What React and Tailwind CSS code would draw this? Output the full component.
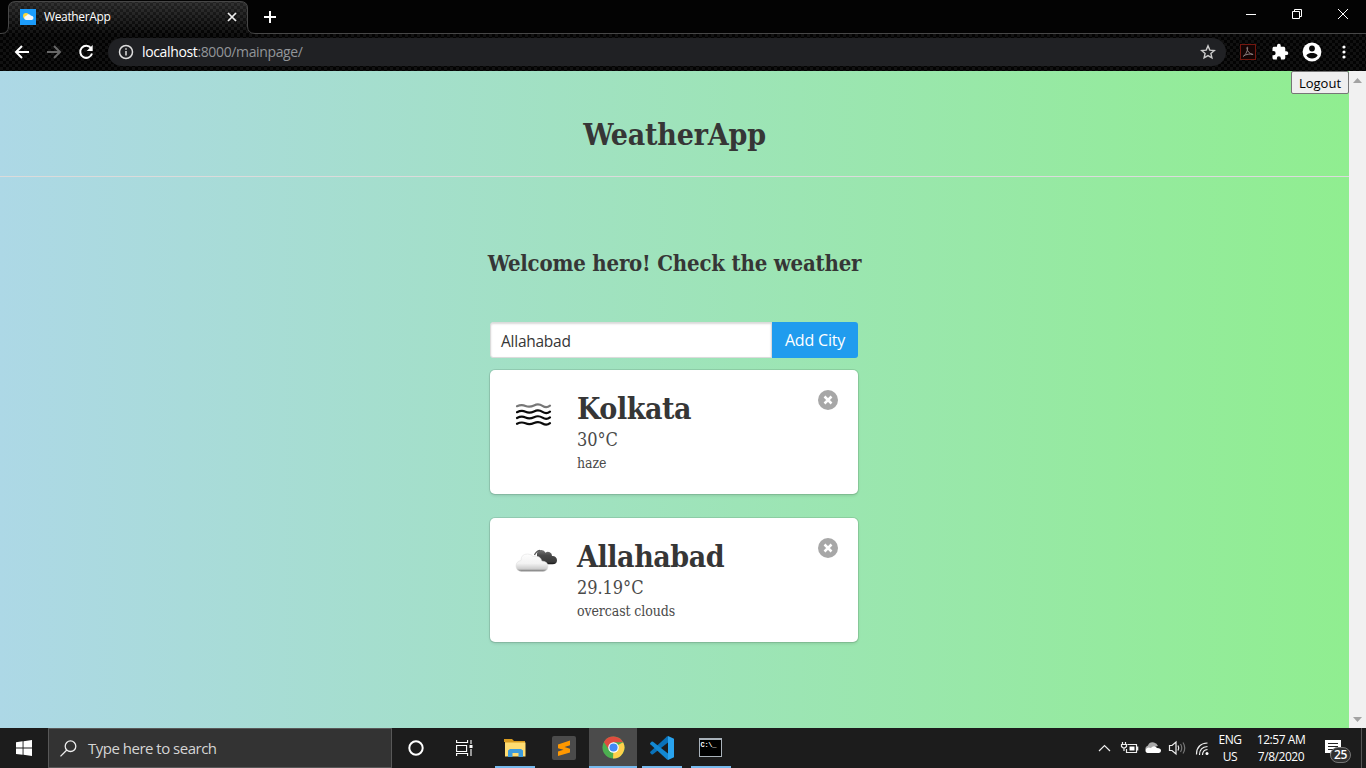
import React from "react";

const carbon =
  "bg-[#030303] bg-[linear-gradient(45deg,#111_25%,transparent_25%,transparent_75%,#111_75%),linear-gradient(45deg,#111_25%,transparent_25%,transparent_75%,#111_75%)] bg-[size:6px_6px] bg-[position:0_0,3px_3px]";
const ui = "font-['Open_Sans','Noto_Sans',sans-serif]";
const serif = "font-['DejaVu_Serif_Condensed','DejaVu_Serif',serif] [font-stretch:condensed]";

function BrowserTabs() {
  return (
    <div className="relative flex h-[34px] shrink-0 bg-[#030303]">
      <svg className="absolute left-0 top-0" width="1366" height="34" fill="none">
        <defs>
          <pattern id="weave" width="6" height="6" patternUnits="userSpaceOnUse">
            <rect width="3" height="3" fill="#141414" />
            <rect x="3" y="3" width="3" height="3" fill="#141414" />
          </pattern>
          <linearGradient id="tabShade" x1="0" y1="0" x2="0" y2="1">
            <stop offset="0" stopColor="#fff" stopOpacity=".13" />
            <stop offset="1" stopColor="#fff" stopOpacity="0" />
          </linearGradient>
        </defs>
        <path d="M0 34V33.500Q8.500 33.500 8.500 26V8Q8.500 1.500 16 1.500H240Q247.500 1.500 247.500 8V26Q247.500 33.500 255 33.500V34Z" fill="url(#weave)" />
        <path d="M8.500 34V8Q8.500 1.500 16 1.500H240Q247.500 1.500 247.500 8V34Z" fill="url(#tabShade)" />
        <path d="M0 33.500H1Q8.500 33.500 8.500 26V8Q8.500 1.500 16 1.500H240Q247.500 1.500 247.500 8V26Q247.500 33.500 255 33.500H1366" stroke="#474747" />
      </svg>
      <div className="relative flex w-[248px] items-center pl-5">
        <svg width="16" height="16" viewBox="0 0 16 16">
          <rect width="16" height="16" fill="#1c9cfb" />
          <circle cx="6" cy="7" r="3" fill="#ffd83a" />
          <path d="M6.200 11a2 2 0 0 1 0-4 2.600 2.600 0 0 1 4.800-.2 2.100 2.100 0 0 1 .7 4.200z" fill="#f5f7fa" />
        </svg>
        <span className={`ml-2 w-[180px] text-[12px] leading-4 tracking-[-0.35px] text-white ${ui}`}>WeatherApp</span>
        <svg width="16" height="16" viewBox="0 0 16 16" fill="none" stroke="#eee" strokeWidth="1.700">
          <path d="m4 4 8 8M12 4l-8 8" />
        </svg>
      </div>
      <svg className="relative ml-[14px] mt-[9px]" width="16" height="16" stroke="#fff" strokeWidth="2">
        <path d="M8 2v12M2 8h12" />
      </svg>
      <div className="relative ml-auto flex items-start pt-2">
        <svg width="138" height="14" fill="none" stroke="#fff" shapeRendering="geometricPrecision">
          <path d="M18 6.500h10M64.500 3.500h7v7h-7zM66.500 3.500v-2h7v7h-2M110 1l10 10M120 1l-10 10" />
        </svg>
      </div>
    </div>
  );
}

function AddressBar() {
  return (
    <div className={`flex h-[37px] shrink-0 items-center pb-px ${carbon}`}>
      <svg width="108" height="36" fill="none" stroke="#fff" strokeWidth="2">
        <path d="M29 18H16.500M22 12l-6 6 6 6" />
        <path d="M47 18h12.500M54 12l6 6-6 6" stroke="#686868" />
        <path d="M91 14.200A6 6 0 1 0 92 19.500" />
        <path d="M92.700 11v6h-6z" fill="#fff" stroke="none" />
      </svg>
      <div className="flex h-7 w-[1118px] items-center rounded-full bg-[#202124] pl-[10px] pr-[10px]">
        <svg width="16" height="16" fill="none" stroke="#ddd" strokeWidth="1.500">
          <circle cx="8" cy="8" r="6.500" />
          <path d="M8 7v4.500M8 4.300v1.500" />
        </svg>
        <span className={`ml-2 text-[14px] leading-5 tracking-[-0.36px] text-[#929599] ${ui}`}>
          <span className="text-white">localhost</span>:8000/mainpage/
        </span>
        <svg className="ml-auto" width="16" height="16" viewBox="0 0 16 16" fill="none" stroke="#ccc" strokeWidth="1.400">
          <path d="m8 1.900 1.800 4.200 4.500.4-3.400 3 1 4.400L8 11.600l-3.900 2.300 1-4.400-3.400-3 4.500-.4z" />
        </svg>
      </div>
      <div className="flex grow items-center">
        <svg className="ml-[14px]" width="16" height="16" fill="none">
          <rect x=".5" y=".5" width="15" height="15" fill="#140404" stroke="#74170f" />
          <path d="M3 12.500c1.500-.4 4.700-5 4.700-8.500 0-1.300-1-1.200-.8.300.5 3 2.500 5.700 6.200 6.200-3-1-7-.3-9.600 1.500" stroke="#8b8080" />
        </svg>
        <svg className="ml-[15px]" width="18" height="18" viewBox="0 0 24 24" fill="#fff">
          <path d="M20.500 11H19V7c0-1.100-.9-2-2-2h-4V3.500a2.500 2.500 0 0 0-5 0V5H4c-1.100 0-2 .9-2 2v3.800h1.500a2.700 2.700 0 0 1 0 5.400H2V20c0 1.100.9 2 2 2h3.800v-1.500a2.700 2.700 0 0 1 5.400 0V22H17c1.100 0 2-.9 2-2v-4h1.500a2.500 2.500 0 0 0 0-5z" />
        </svg>
        <svg className="ml-[13px]" width="20" height="20" viewBox="0 0 20 20">
          <circle cx="10" cy="10" r="9.400" fill="#fff" />
          <circle cx="10" cy="6.500" r="2.900" fill="#080808" />
          <path d="M4.300 13.300C5.500 11.500 8 11 10 11s4.500.5 5.700 2.300A6.600 6.600 0 0 1 10 16.500a6.600 6.600 0 0 1-5.700-3.200z" fill="#080808" />
        </svg>
        <svg className="ml-[20px]" width="4" height="14" fill="#fff">
          <circle cx="2" cy="2" r="1.600" />
          <circle cx="2" cy="7" r="1.600" />
          <circle cx="2" cy="12" r="1.600" />
        </svg>
      </div>
    </div>
  );
}

function HazeIcon() {
  return (
    <svg width="50" height="50" fill="none" stroke="#0a0a0a" strokeWidth="2.200" strokeLinecap="round">
      <path stroke="#777" d="M7 16.200q4.500-2 8.500-.300t8.500-.500 8.500.500 7.500-.200" />
      <path d="M7 22.200q4.500-2.300 8.500-.500t8.500-.300 8.500.500 7.500-.300M7 28q4.500-2.300 8.500-.500t8.500-.300 8.500.500 7.500-.300M7 33.800q4.500-2.300 8.500-.500t8.500-.300 8.500.500 7.500-.300" />
    </svg>
  );
}

function CloudsIcon() {
  return (
    <svg width="50" height="50" fill="none">
      <defs>
        <linearGradient id="cloudLight" x1="0" y1="15" x2="0" y2="34" gradientUnits="userSpaceOnUse">
          <stop offset="0" stopColor="#fff" />
          <stop offset=".55" stopColor="#f2f2f2" />
          <stop offset=".84" stopColor="#ccc" />
          <stop offset="1" stopColor="#555" />
        </linearGradient>
        <linearGradient id="cloudDark" x1="0" y1="12" x2="0" y2="27" gradientUnits="userSpaceOnUse">
          <stop offset="0" stopColor="#777" />
          <stop offset=".35" stopColor="#4a4a4a" />
          <stop offset=".8" stopColor="#3a3a3a" />
          <stop offset="1" stopColor="#090909" />
        </linearGradient>
      </defs>
      <path d="M27 15.500a4.500 4.500 0 0 1 8.500-.8 4 4 0 0 1 6.500 3.300 4.200 4.200 0 0 1 5 4.200q0 4-4.500 4H33q-2-4-6-4z" fill="url(#cloudDark)" />
      <path d="M24.500 17q1.500-4 5.500-4.700" stroke="#555" strokeWidth="1.200" />
      <path d="M11.500 33.500q-5.300-.5-5.500-5.500.2-4.800 5-5.500 0-6.500 6.500-6.500 4 0 5.500 2.500 7.500-1.500 8.800 4.500 6.200.4 6.200 5.500-.4 4.600-5 5z" fill="url(#cloudLight)" stroke="#ddd" strokeWidth=".5" />
    </svg>
  );
}

function CityCard({ icon, city, temp, desc }) {
  return (
    <div className="flex h-[124px] rounded-[5px] bg-white pl-5 pr-5 pt-5 text-[#4a4a4a] shadow-[0_2px_3px_rgba(10,10,10,0.1),0_0_0_1px_rgba(10,10,10,0.1)]">
      <div className="w-[67px]">{icon}</div>
      <div className={`grow ${serif}`}>
        <div className="h-9 text-[30px] font-bold leading-[38px] tracking-[-0.45px] text-[#363636]">{city}</div>
        <div className="h-[26px] text-[18px] leading-[27px] tracking-[-0.05px]">{temp}</div>
        <div className="h-5 text-[14px] leading-[23px] tracking-[-0.1px]">{desc}</div>
      </div>
      <svg width="20" height="20" stroke="#fff" strokeWidth="2.500">
        <circle cx="10" cy="10" r="10" fill="#a7a7a7" stroke="none" />
        <path d="m6.500 6.500 7 7m0-7-7 7" />
      </svg>
    </div>
  );
}

function Page() {
  return (
    <main className="flex h-[657px] shrink-0">
      <div className="flex w-[1349px] flex-col bg-[linear-gradient(to_right,#add8e6,#90ee90)]">
        <header className="flex h-[106px] flex-col border-b border-[#dbdbdb]">
          <button className={`h-[23px] w-[58px] self-end rounded-[2px] border border-[#767676] bg-[#efefef] pt-px text-[13px] leading-[20px] text-black ${ui}`}>
            Logout
          </button>
          <h1 className={`mt-[22px] text-center text-[30px] font-bold leading-[38px] tracking-[-0.2px] text-[#363636] ${serif}`}>WeatherApp</h1>
        </header>
        <h2 className={`mt-[70px] text-center text-[22px] font-bold leading-8 tracking-[-0.2px] text-[#363636] ${serif}`}>
          Welcome hero! Check the weather
        </h2>
        <section className="ml-[490px] mt-[43px] w-[368px]">
          <div className={`flex h-9 ${ui}`}>
            <div className="flex w-[282px] items-center rounded-l-[3px] border border-[#dbdbdb] bg-white pl-[10px] text-[15.500px] leading-6 tracking-[-0.25px] text-[#363636] shadow-[inset_0_1px_2px_rgba(10,10,10,0.15)]">
              <span className="mt-px">Allahabad</span>
            </div>
            <button className="w-[86px] rounded-r-[3px] bg-[#209cee] text-[16px] leading-6 tracking-[-0.2px] text-white">Add City</button>
          </div>
          <div className="mt-3 flex flex-col gap-6">
            <CityCard icon={<HazeIcon />} city="Kolkata" temp="30°C" desc="haze" />
            <CityCard icon={<CloudsIcon />} city="Allahabad" temp="29.19°C" desc="overcast clouds" />
          </div>
        </section>
      </div>
      <div className="flex w-[17px] flex-col items-center justify-between bg-[#f1f1f1] pb-[6px] pt-[7px]">
        <svg width="9" height="5" fill="#a3a3a3"><path d="M0 5 4.500 0 9 5z" /></svg>
        <svg width="9" height="5" fill="#a3a3a3"><path d="M0 0 4.500 5 9 0z" /></svg>
      </div>
    </main>
  );
}

function TaskButton({ children, className }) {
  return <div className={`flex h-10 items-center justify-center ${className}`}>{children}</div>;
}

function Taskbar() {
  return (
    <footer className={`flex h-10 shrink-0 items-center bg-[#1c1c1c] text-white ${ui}`}>
      <TaskButton className="w-12">
        <svg width="16" height="16" fill="#fff"><path d="M0 2.200 6.600 1.300V7.600H0zM7.500 1.200 16 0V7.600H7.500zM0 8.500h6.600v6.300L0 13.900zM7.500 8.500H16V16l-8.500-1.200z" /></svg>
      </TaskButton>
      <div className="flex h-10 w-[344px] items-center border border-[#585858] bg-[#333] pl-[11px]">
        <svg width="17" height="17" fill="none" stroke="#eee" strokeWidth="1.300">
          <circle cx="10.500" cy="6.200" r="5.300" />
          <path d="m6.800 10-6.300 6.400" />
        </svg>
        <span className="ml-[11px] text-[15px] leading-5 tracking-[-0.5px] text-[#d5d5d5]">Type here to search</span>
      </div>
      <TaskButton className="w-12">
        <svg width="18" height="18" fill="none" stroke="#fff" strokeWidth="2"><circle cx="9" cy="9" r="6.700" /></svg>
      </TaskButton>
      <TaskButton className="w-[55px] pr-[7px]">
        <svg width="17" height="16" fill="none" stroke="#fff" strokeWidth="1.100">
          <path d="M.6 0v2.500h11V0M.6 5.500h10v6H.6zM.6 16v-2.500h11V16M15 0v4M15 9v7" />
          <path d="M13.500 5h3v3h-3z" fill="#fff" stroke="none" />
        </svg>
      </TaskButton>
      <TaskButton className="mr-[9px] w-10 border-b-2 border-[#76b9ed]">
        <svg className="mt-px" width="22" height="18">
          <path d="M0 0h8l2 2h11v15H1V3H0z" fill="#d99b1f" />
          <path d="M1 3.500h20.500V17.500H1z" fill="#ffdc71" />
          <path d="M4 18v-6.500L6 10h11l2 1.500V18h-4.500v-4h-6v4z" fill="#3c9bdd" />
        </svg>
      </TaskButton>
      <TaskButton className="w-10">
        <svg width="24" height="24">
          <rect width="24" height="24" rx="2" fill="#4b4b4b" />
          <path d="M6 8.500 18 4.500v4.700l-5.500 1.900 5.500 1.700v3.700L6 20v-4.400l5.500-1.800L6 12.200z" fill="#ff9800" />
        </svg>
      </TaskButton>
      <TaskButton className="ml-[5px] mr-[5px] w-12 border-b-2 border-[#76b9ed] bg-[#4b4b4b]">
        <svg width="23" height="23" viewBox="0 0 48 48" className="mt-px">
          <circle cx="24" cy="24" r="23" fill="#4caf50" />
          <path d="M24 24 44 13A23 23 0 0 1 23 47z" fill="#ffd04b" />
          <path d="M4 12.500A23 23 0 0 1 44 13H24v11l-9 5z" fill="#df4c3f" />
          <circle cx="24" cy="24" r="11" fill="#fff" />
          <circle cx="24" cy="24" r="8.500" fill="#4389f5" />
        </svg>
      </TaskButton>
      <TaskButton className="mr-[9px] w-10 border-b-2 border-[#76b9ed]">
        <svg className="mt-px" width="24" height="24" viewBox="0 0 24 24">
          <path d="m18 0 6 2.800v18.400L18 24z" fill="#29a3ee" />
          <path d="M18 6.600 3 18.300q-1 .5-1.500 0L.3 17q-.5-.7 0-1.300L17 .5 18 0z" fill="#0a72ba" />
          <path d="M18 17.400 3 5.700q-1-.5-1.500 0L.3 7q-.5.700 0 1.300L17 23.500l1 .5z" fill="#1388d2" />
        </svg>
      </TaskButton>
      <TaskButton className="w-10 border-b-2 border-[#76b9ed]">
        <div className="mr-[2px] flex h-[19px] w-[23px] items-start border border-t-2 border-[#a9b2ba] bg-black pl-px font-['Liberation_Mono',monospace] text-[7px] font-bold leading-[10px] tracking-[-0.3px] text-white">C:\_</div>
      </TaskButton>
      <div className="ml-auto flex h-10 items-center">
        <svg width="112" height="20" fill="none" stroke="#eee" strokeWidth="1.200">
          <path d="m1 13 5.500-5.500L12 13" />
          <path d="M29.500 6.500h9v8h-10V11M39.700 8.500v4M24.500 4v3M27.500 4v3M23.500 6.500h5v2q-2.500 3-5 0zM26 10v3" />
          <path d="M31.500 8.500h5v4h-5z" fill="#fff" stroke="none" />
          <path d="M48 13q-2-4 2-5.500 1.500-4 6-3 3 .5 4 3.500l-6 1.500z" fill="#aaa" stroke="none" />
          <path d="M49.500 15q-3-1-1.500-4 2-2.500 4.500-1 4-3.500 6.500 0 4 0 4 2.700 0 2-2 2.300z" fill="#fff" stroke="none" />
          <path d="M71.500 7.500h2.500l4-3.500v12l-4-3.500h-2.500z" />
          <path d="M80 7.500q1.500 2.500 0 5" />
          <path d="M82.500 6q2.500 4 0 8M85 4.500q3.500 5.500 0 11" stroke="#777" />
          <path d="M101.500 17q0-8 8-8.500M104.500 17q0-5 5-5.500M98.500 16.500q0-11 11-11.500" />
          <circle cx="109" cy="15.500" r="1.500" fill="#fff" stroke="none" />
        </svg>
        <div className="ml-[7px] flex w-[26px] flex-col items-center text-[12px] leading-[17px] tracking-[-0.5px]">
          <span>ENG</span>
          <span>US</span>
        </div>
        <div className="ml-[12px] flex w-[52px] flex-col items-center whitespace-nowrap text-[12px] leading-[17px] tracking-[-0.45px]">
          <span>12:57 AM</span>
          <span>7/8/2020</span>
        </div>
        <div className="relative ml-[18px] h-10 w-[36px]">
          <svg className="absolute left-0 top-3" width="16" height="16">
            <path d="M0 0h16v13H8l-3 3v-3H0z" fill="#fff" />
            <path d="M3 3.500h10M3 6.500h10M3 9.500h5" stroke="#222" />
          </svg>
          <div className="absolute left-[5px] top-[19px] flex h-4 w-[21px] items-center justify-center rounded-full border border-[#777] bg-[#303030] text-[12px] font-semibold leading-4 tracking-[-0.4px]">25</div>
        </div>
        <div className="h-10 w-[5px] border-l border-[#555]" />
      </div>
    </footer>
  );
}

export default function App() {
  return (
    <div className="flex h-[768px] w-[1366px] flex-col overflow-hidden">
      <BrowserTabs />
      <AddressBar />
      <Page />
      <Taskbar />
    </div>
  );
}
